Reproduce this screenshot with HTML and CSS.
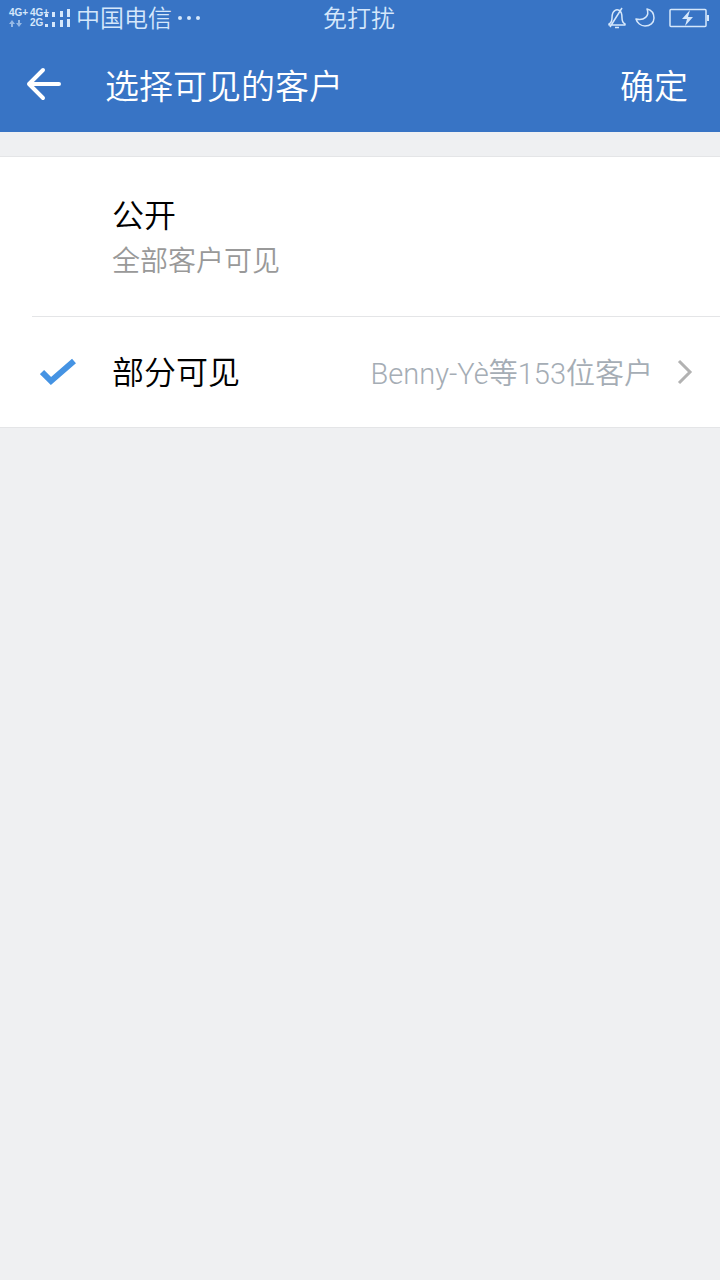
FILE: index.html
```html
<!DOCTYPE html>
<html lang="zh-CN">
<head>
  <meta charset="utf-8">
  <meta name="viewport" content="width=device-width, initial-scale=1">
  <title>选择可见的客户</title>
  <link rel="stylesheet" href="styles.css">
</head>
<body>
  <div class="top">
    <div class="status">
      <div class="status-left">
        <div class="net">
          <span>4G+</span>
          <svg class="arrows" width="16" height="8" viewBox="0 0 16 8" aria-hidden="true"><path d="M3 0 6 4H4v3H2V4H0zM10 7 7 3h2V0h2v3h2z"/></svg>
        </div>
        <div class="net">
          <span>4G+</span>
          <span>2G</span>
        </div>
        <svg class="signal" width="26" height="20" viewBox="0 0 26 20" aria-hidden="true"><path d="M0 6h3v3H0zM7 4h3v5H7zM15 3h3v6h-3zM22 1h3v8h-3zM0 16h3v3H0zM7 14h3v5H7zM15 12h3v7h-3zM22 11h3v8h-3z"/></svg>
        <span class="status-text carrier">中国电信</span>
        <svg class="dots" width="24" height="4" viewBox="0 0 24 4" aria-hidden="true"><circle cx="2" cy="2" r="2"/><circle cx="11" cy="2" r="2"/><circle cx="20" cy="2" r="2"/></svg>
      </div>
      <span class="status-text">免打扰</span>
      <div class="status-right">
        <svg class="line-icon" width="20" height="22" viewBox="0 0 20 22" aria-hidden="true"><path d="M8 3.500c1-.700 3-.700 4.500 0C15 5 15 8 15 11c0 3 1 5 3 6v1H2v-1c2-1 3-3 3-6 0-3 0-6 3-7.500zM8 20.500h4M3 20 15 1"/></svg>
        <svg class="line-icon moon" width="20" height="20" viewBox="0 0 20 20" aria-hidden="true"><path d="M12 1c4 1 7 4 7 9 0 5-4 8-9 8-4 0-8-3-9-7 8 2 14-3 11-10z"/></svg>
        <svg class="battery" width="40" height="20" viewBox="0 0 40 20" aria-hidden="true"><rect class="case" x="1" y="1.500" width="36" height="17" rx="1"/><path d="M38 7h2v6h-2zM21 2l-8 9h5l-2 7 8-9h-5z"/></svg>
      </div>
    </div>
    <header class="bar">
      <button class="back" type="button" aria-label="返回">
        <svg width="36" height="36" viewBox="0 0 36 36" aria-hidden="true"><path d="M17 4 3 18l14 14M3 18h30"/></svg>
      </button>
      <h1 class="title">选择可见的客户</h1>
      <button class="confirm" type="button">确定</button>
    </header>
  </div>

  <main class="list">
    <div class="row row-public">
      <input class="choice" type="radio" name="visible" id="public">
      <label class="label" for="public">公开<span class="note">全部客户可见</span></label>
    </div>
    <div class="row row-partial">
      <input class="choice" type="radio" name="visible" id="partial" checked>
      <svg class="tick" width="36" height="28" viewBox="0 0 36 28" aria-hidden="true"><path d="M2 14 11 23 34 3"/></svg>
      <label class="label" for="partial">部分可见</label>
      <button class="value" type="button">
        <span>Benny-Yè等153位客户</span>
        <svg width="16" height="26" viewBox="0 0 16 26" aria-hidden="true"><path d="M2 2 13 13 2 24"/></svg>
      </button>
    </div>
  </main>
</body>
</html>
```
FILE: styles.css
```css
* {
  box-sizing: border-box;
}

body {
  margin: 0;
  min-height: 100vh;
  background: #eff0f2;
  color: #000;
  font-family: Roboto, "Noto Sans CJK SC", sans-serif;
  font-weight: 350;
}

button {
  padding: 0;
  border: 0;
  background: none;
  color: inherit;
  font: inherit;
}

svg {
  display: block;
  flex: none;
}

.top {
  background: #3874c5;
  color: #fff;
}

.status {
  display: grid;
  grid-template-columns: 1fr auto 1fr;
  align-items: center;
  height: 36px;
  padding: 0 11px 0 9px;
  color: #d5e7fb;
  fill: #d5e7fb;
}

.status-text {
  padding-top: 2px;
  font-size: 24px;
  line-height: 34px;
}

.status-left,
.status-right {
  display: flex;
  align-items: center;
}

.status-right {
  justify-content: flex-end;
}

.net {
  width: 21px;
  font: bold 10px/10px "Liberation Sans", sans-serif;
}

.net span {
  display: block;
}

.arrows {
  margin-top: 2px;
  opacity: 0.6;
}

.net + .net {
  width: 15px;
}

.carrier {
  margin: 0 6px 0 5px;
}

.line-icon {
  fill: none;
  stroke: #d5e7fb;
  stroke-width: 1.5;
  stroke-linejoin: round;
}

.moon {
  margin: 0 14px 0 8px;
}

.case {
  fill: none;
  stroke: #d5e7fb;
  stroke-width: 1.5;
}

.bar {
  display: flex;
  align-items: center;
  height: 96px;
  padding: 0 32px 0 26px;
  font-size: 34px;
}

.back {
  fill: none;
  stroke: #fff;
  stroke-width: 4;
  stroke-linecap: round;
  stroke-linejoin: round;
}

.title {
  flex: 1;
  margin: 0 0 0 43px;
  font-size: inherit;
  font-weight: inherit;
}

.list {
  margin-top: 24px;
  border: solid #e4e5e7;
  border-width: 1px 0;
  background: #fff;
}

.row {
  display: flex;
  align-items: center;
  padding-left: 40px;
}

.row-public {
  padding-top: 37px;
  padding-bottom: 31px;
  background: linear-gradient(#e4e5e7, #e4e5e7) 32px 100% / 100% 1px no-repeat;
}

.row-partial {
  height: 110px;
  padding-right: 27px;
}

.choice {
  appearance: none;
  width: 36px;
  height: 28px;
  margin: 0 36px 0 0;
}

.tick {
  margin: 0 36px 0 -72px;
  fill: none;
  stroke: #4593e3;
  stroke-width: 6;
  pointer-events: none;
}

.label {
  flex: 1;
  font-size: 32px;
  line-height: 44px;
}

.row-partial .label {
  padding-top: 2px;
}

.note {
  display: block;
  color: #999;
  font-size: 28px;
  line-height: 48px;
}

.value {
  display: flex;
  align-items: center;
  gap: 24px;
  color: #a5adb5;
  font-size: 29px;
  fill: none;
  stroke: #b2b2b2;
  stroke-width: 3;
}

.value span {
  padding-bottom: 3px;
  stroke: none;
}
```
